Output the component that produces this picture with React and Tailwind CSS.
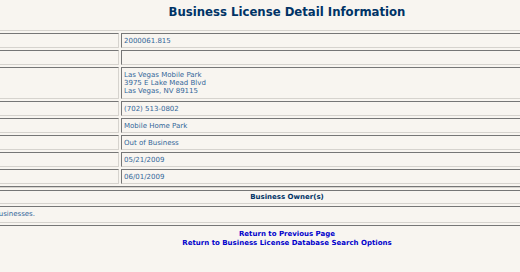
const details = [
  ["2000061.815"],
  ["\u00a0"],
  ["Las Vegas Mobile Park", "3975 E Lake Mead Blvd", "Las Vegas, NV 89115"],
  ["(702) 513-0802"],
  ["Mobile Home Park"],
  ["Out of Business"],
  ["05/21/2009"],
  ["06/01/2009"],
];

const tableCls =
  "w-full table-fixed border-separate border-spacing-[2px] border border-t-[#d6d3ce] border-l-[#d6d3ce] border-b-[#767676] border-r-[#767676]";
const cellCls =
  "border border-t-[#767676] border-l-[#767676] border-b-[#d6d3ce] border-r-[#d6d3ce] px-[2px] leading-[8px] align-middle";

export default function App() {
  return (
    <div className="w-[520px] h-[272px] overflow-hidden bg-[#f8f5f0] font-['DejaVu_Sans',Verdana,sans-serif] text-[7px] text-[#336699]">
      <div className="ml-[-120px] w-[814px]">
        <h1 className="h-[30px] pt-[4px] text-center text-[13px] leading-[16px] font-bold text-[#003366] font-['DejaVu_Sans_Condensed','DejaVu_Sans',sans-serif]">
          Business License Detail Information
        </h1>

        <table className={tableCls}>
          <colgroup>
            <col className="w-[236px]" />
            <col />
          </colgroup>
          <tbody>
            {details.map((lines, i) => {
              const pad = lines.length > 1 ? " pt-[3px] pb-[3px]" : " pt-[3px] pb-[2px]";
              return (
                <tr key={i}>
                  <td className={cellCls + pad}>{"\u00a0"}</td>
                  <td className={cellCls + pad}>
                    {lines.map((l, j) => (
                      <div key={j}>{l}</div>
                    ))}
                  </td>
                </tr>
              );
            })}
          </tbody>
        </table>

        <table className={tableCls}>
          <tbody>
            <tr>
              <td className={cellCls + " pt-[2px] pb-[2px] text-center font-bold text-[#003366]"}>
                Business Owner(s)
              </td>
            </tr>
            <tr>
              <td className={cellCls + " pt-[3px] pb-[4px]"}>
                <div className="w-[149px] flex justify-end whitespace-nowrap">
                  Owner information is not available for inactive businesses.
                </div>
              </td>
            </tr>
          </tbody>
        </table>

        <div className="mt-[4px] flex flex-col items-center font-bold text-[#0000cc] leading-[9px]">
          <a href="#">Return to Previous Page</a>
          <a href="#">Return to Business License Database Search Options</a>
        </div>
      </div>
    </div>
  );
}
